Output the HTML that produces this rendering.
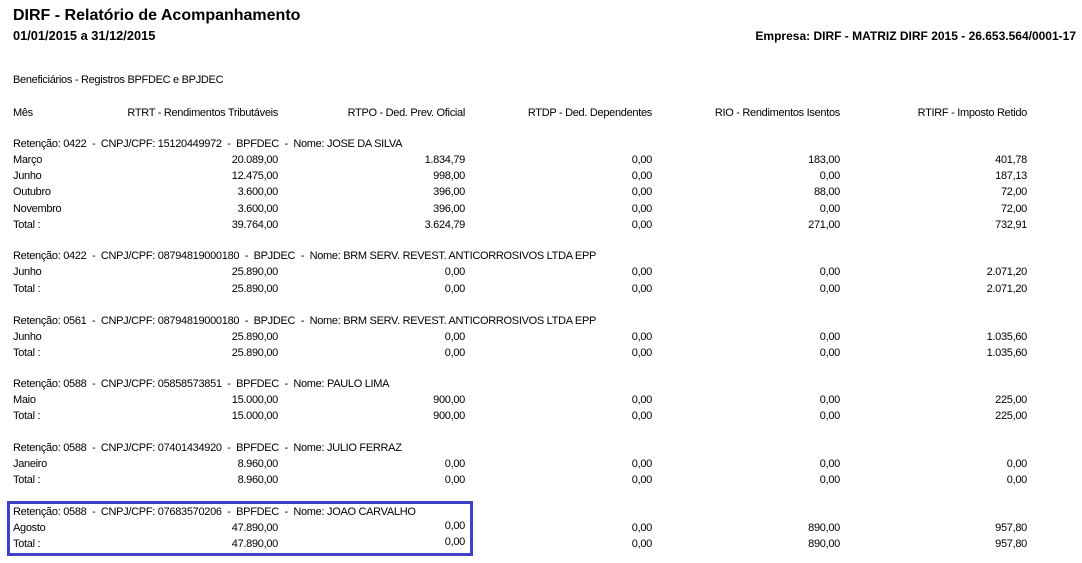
<!DOCTYPE html>
<html><head><meta charset="utf-8"><style>
body{margin:0;width:1082px;height:563px;background:#fff;position:relative;overflow:hidden;font-family:"Liberation Sans",sans-serif;color:#000}
.r{position:absolute;left:0;width:1082px;height:14px;font-size:11px;line-height:14px;letter-spacing:-0.3px}
.r span{position:absolute;top:0;white-space:nowrap}
.l{left:13px}
.a{left:78px;width:200px;text-align:right}
.b{left:265px;width:200px;text-align:right}
.c{left:452px;width:200px;text-align:right}
.d{left:640px;width:200px;text-align:right}
.e{left:827px;width:200px;text-align:right}
.t{position:absolute;font-weight:bold;white-space:nowrap}
</style></head><body>
<div class="t" style="left:13px;top:5px;font-size:16px;line-height:22px">DIRF - Relatório de Acompanhamento</div>
<div class="t" style="left:13px;top:28px;font-size:12.8px;line-height:16px">01/01/2015 a 31/12/2015</div>
<div class="t" style="right:6px;top:28px;font-size:12px;line-height:16px">Empresa: DIRF - MATRIZ DIRF 2015 - 26.653.564/0001-17</div>
<div class="r" style="top:73px"><span class="l">Beneficiários - Registros BPFDEC e BPJDEC</span></div>
<div class="r" style="top:106px"><span class="l">Mês</span><span class="a">RTRT - Rendimentos Tributáveis</span><span class="b">RTPO - Ded. Prev. Oficial</span><span class="c">RTDP - Ded. Dependentes</span><span class="d">RIO - Rendimentos Isentos</span><span class="e">RTIRF - Imposto Retido</span></div>

<div class="r" style="top:137px"><span class="l">Retenção: 0422 &nbsp;- &nbsp;CNPJ/CPF: 15120449972 &nbsp;- &nbsp;BPFDEC &nbsp;- &nbsp;Nome: JOSE DA SILVA</span></div>
<div class="r" style="top:153px"><span class="l">Março</span><span class="a">20.089,00</span><span class="b">1.834,79</span><span class="c">0,00</span><span class="d">183,00</span><span class="e">401,78</span></div>
<div class="r" style="top:169px"><span class="l">Junho</span><span class="a">12.475,00</span><span class="b">998,00</span><span class="c">0,00</span><span class="d">0,00</span><span class="e">187,13</span></div>
<div class="r" style="top:185px"><span class="l">Outubro</span><span class="a">3.600,00</span><span class="b">396,00</span><span class="c">0,00</span><span class="d">88,00</span><span class="e">72,00</span></div>
<div class="r" style="top:202px"><span class="l">Novembro</span><span class="a">3.600,00</span><span class="b">396,00</span><span class="c">0,00</span><span class="d">0,00</span><span class="e">72,00</span></div>
<div class="r" style="top:218px"><span class="l">Total :</span><span class="a">39.764,00</span><span class="b">3.624,79</span><span class="c">0,00</span><span class="d">271,00</span><span class="e">732,91</span></div>

<div class="r" style="top:249px"><span class="l">Retenção: 0422 &nbsp;- &nbsp;CNPJ/CPF: 08794819000180 &nbsp;- &nbsp;BPJDEC &nbsp;- &nbsp;Nome: BRM SERV. REVEST. ANTICORROSIVOS LTDA EPP</span></div>
<div class="r" style="top:265px"><span class="l">Junho</span><span class="a">25.890,00</span><span class="b">0,00</span><span class="c">0,00</span><span class="d">0,00</span><span class="e">2.071,20</span></div>
<div class="r" style="top:282px"><span class="l">Total :</span><span class="a">25.890,00</span><span class="b">0,00</span><span class="c">0,00</span><span class="d">0,00</span><span class="e">2.071,20</span></div>

<div class="r" style="top:314px"><span class="l">Retenção: 0561 &nbsp;- &nbsp;CNPJ/CPF: 08794819000180 &nbsp;- &nbsp;BPJDEC &nbsp;- &nbsp;Nome: BRM SERV. REVEST. ANTICORROSIVOS LTDA EPP</span></div>
<div class="r" style="top:330px"><span class="l">Junho</span><span class="a">25.890,00</span><span class="b">0,00</span><span class="c">0,00</span><span class="d">0,00</span><span class="e">1.035,60</span></div>
<div class="r" style="top:346px"><span class="l">Total :</span><span class="a">25.890,00</span><span class="b">0,00</span><span class="c">0,00</span><span class="d">0,00</span><span class="e">1.035,60</span></div>

<div class="r" style="top:377px"><span class="l">Retenção: 0588 &nbsp;- &nbsp;CNPJ/CPF: 05858573851 &nbsp;- &nbsp;BPFDEC &nbsp;- &nbsp;Nome: PAULO LIMA</span></div>
<div class="r" style="top:393px"><span class="l">Maio</span><span class="a">15.000,00</span><span class="b">900,00</span><span class="c">0,00</span><span class="d">0,00</span><span class="e">225,00</span></div>
<div class="r" style="top:409px"><span class="l">Total :</span><span class="a">15.000,00</span><span class="b">900,00</span><span class="c">0,00</span><span class="d">0,00</span><span class="e">225,00</span></div>

<div class="r" style="top:441px"><span class="l">Retenção: 0588 &nbsp;- &nbsp;CNPJ/CPF: 07401434920 &nbsp;- &nbsp;BPFDEC &nbsp;- &nbsp;Nome: JULIO FERRAZ</span></div>
<div class="r" style="top:457px"><span class="l">Janeiro</span><span class="a">8.960,00</span><span class="b">0,00</span><span class="c">0,00</span><span class="d">0,00</span><span class="e">0,00</span></div>
<div class="r" style="top:473px"><span class="l">Total :</span><span class="a">8.960,00</span><span class="b">0,00</span><span class="c">0,00</span><span class="d">0,00</span><span class="e">0,00</span></div>

<div style="position:absolute;left:7px;top:501px;width:460px;height:49px;border:3px solid #4040c8"></div>
<div class="r" style="top:505px"><span class="l">Retenção: 0588 &nbsp;- &nbsp;CNPJ/CPF: 07683570206 &nbsp;- &nbsp;BPFDEC &nbsp;- &nbsp;Nome: JOAO CARVALHO</span></div>
<div class="r" style="top:521px"><span class="l">Agosto</span><span class="a">47.890,00</span><span class="b" style="top:-2px">0,00</span><span class="c">0,00</span><span class="d">890,00</span><span class="e">957,80</span></div>
<div class="r" style="top:537px"><span class="l">Total :</span><span class="a">47.890,00</span><span class="b" style="top:-2px">0,00</span><span class="c">0,00</span><span class="d">890,00</span><span class="e">957,80</span></div>
</body></html>
